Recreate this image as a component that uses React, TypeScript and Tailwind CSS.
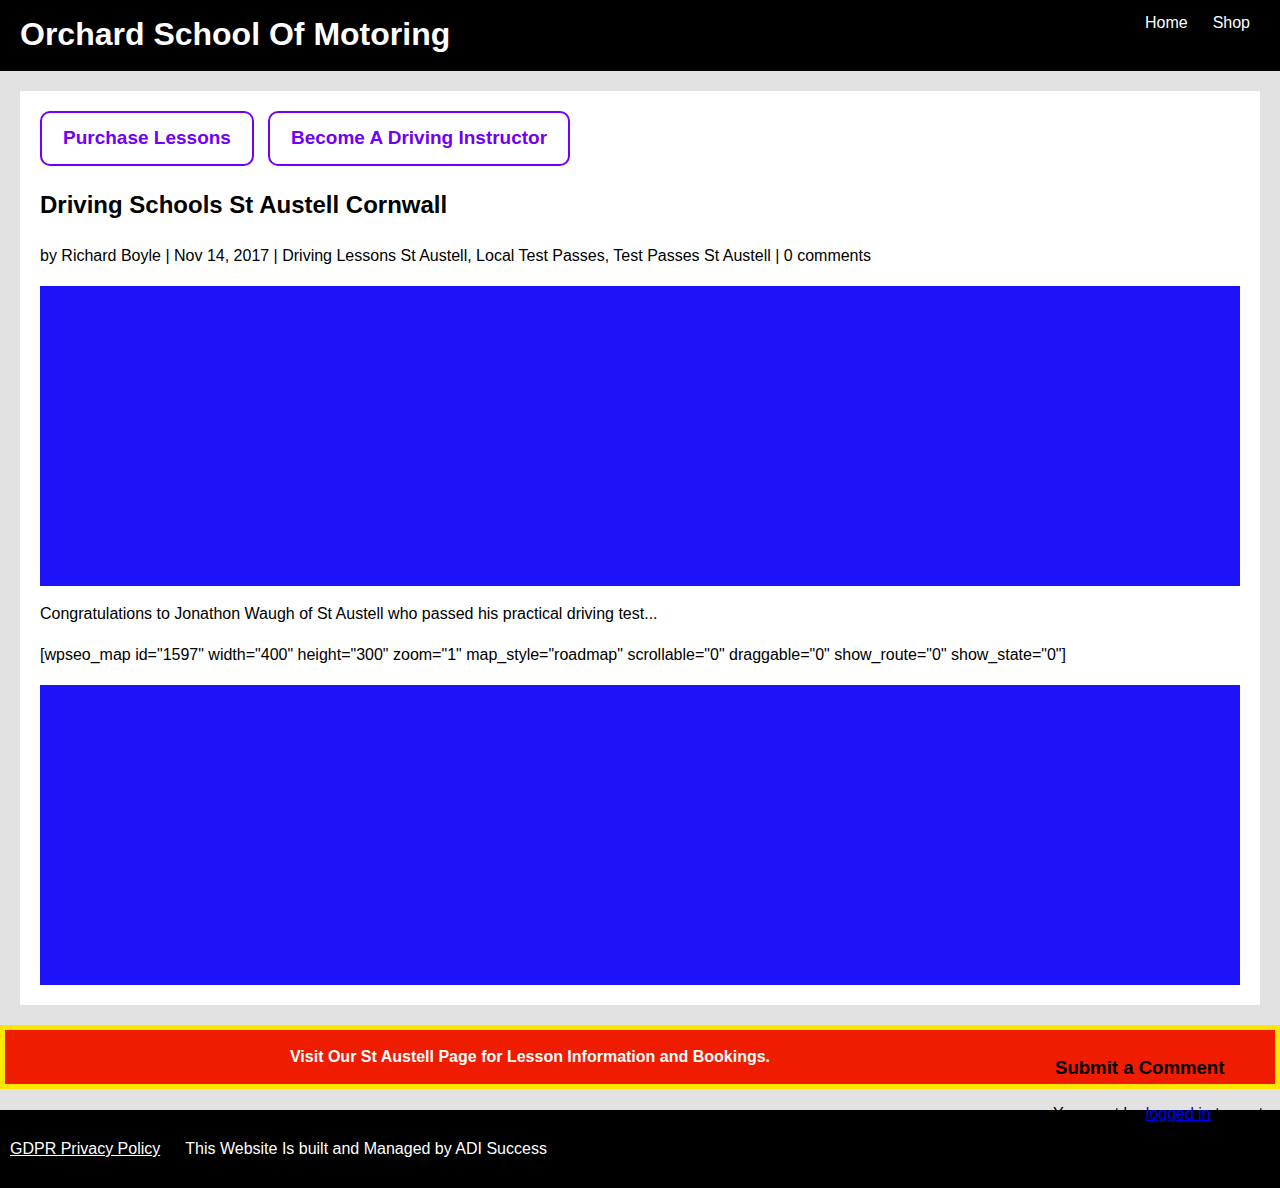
export default function App() {
  return (
    <div className="min-h-[1188px] bg-[#e2e2e2] font-['Liberation_Sans',Arial,sans-serif] text-black">
      <header className="flex h-[71px] items-start justify-between bg-black pl-[20px] pr-[30px]">
        <h1 className="mt-[15px] text-[32px] font-bold leading-[38px] text-white">Orchard School Of Motoring</h1>
        <nav className="mt-[14px] flex gap-[25px] text-[16px] leading-[18px] text-white">
          <a href="#">Home</a>
          <a href="#">Shop</a>
        </nav>
      </header>

      <main className="px-[20px] pt-[20px]">
        <article className="bg-white p-[20px]">
          <div className="flex gap-[14px]">
            <a
              href="#"
              className="flex h-[55px] items-center rounded-[10px] border-2 border-[#7000f8] px-[21px] text-[19px] font-bold text-[#7000f8]"
            >
              Purchase Lessons
            </a>
            <a
              href="#"
              className="flex h-[55px] items-center rounded-[10px] border-2 border-[#7000f8] px-[21px] text-[19px] font-bold text-[#7000f8]"
            >
              Become A Driving Instructor
            </a>
          </div>

          <h2 className="mt-[25px] text-[24px] font-bold leading-[28px]">Driving Schools St Austell Cornwall</h2>
          <p className="mt-[28px] text-[16px] leading-[18px]">
            by Richard Boyle | Nov 14, 2017 | Driving Lessons St Austell, Local Test Passes, Test Passes St Austell | 0 comments
          </p>

          <div className="mt-[21px] h-[300px] bg-[#1e12f8]" />

          <p className="mt-[19px] text-[16px] leading-[18px]">
            Congratulations to Jonathon Waugh of St Austell who passed his practical driving test...
          </p>
          <p className="mt-[23px] text-[16px] leading-[18px]">
            [wpseo_map id="1597" width="400" height="300" zoom="1" map_style="roadmap" scrollable="0" draggable="0" show_route="0" show_state="0"]
          </p>

          <div className="mt-[21px] h-[300px] bg-[#1e12f8]" />
        </article>
      </main>

      <section className="mt-[20px] flex h-[64px] border-[5px] border-[#ffe600] bg-[#f01c00]">
        <div className="flex flex-1 items-center justify-center text-[16px] font-bold leading-[18px] text-white">
          Visit Our St Austell Page for Lesson Information and Bookings.
        </div>
        <div className="relative z-10 w-[220px] self-start pt-[27px]">
          <h3 className="text-[18.6px] font-bold leading-[22px]">Submit a Comment</h3>
          <p className="mt-[26px] -ml-[2px] text-[16px] leading-[18px]">
            You must be{' '}
            <a href="#" className="text-[#0000ee] underline">
              logged in
            </a>{' '}
            to post a comment.
          </p>
        </div>
      </section>

      <footer className="mt-[21px] flex h-[78px] items-center gap-[25px] bg-black px-[10px] text-[16px] leading-[18px] text-white">
        <a href="#" className="underline">
          GDPR Privacy Policy
        </a>
        <span>This Website Is built and Managed by ADI Success</span>
      </footer>
    </div>
  );
}
